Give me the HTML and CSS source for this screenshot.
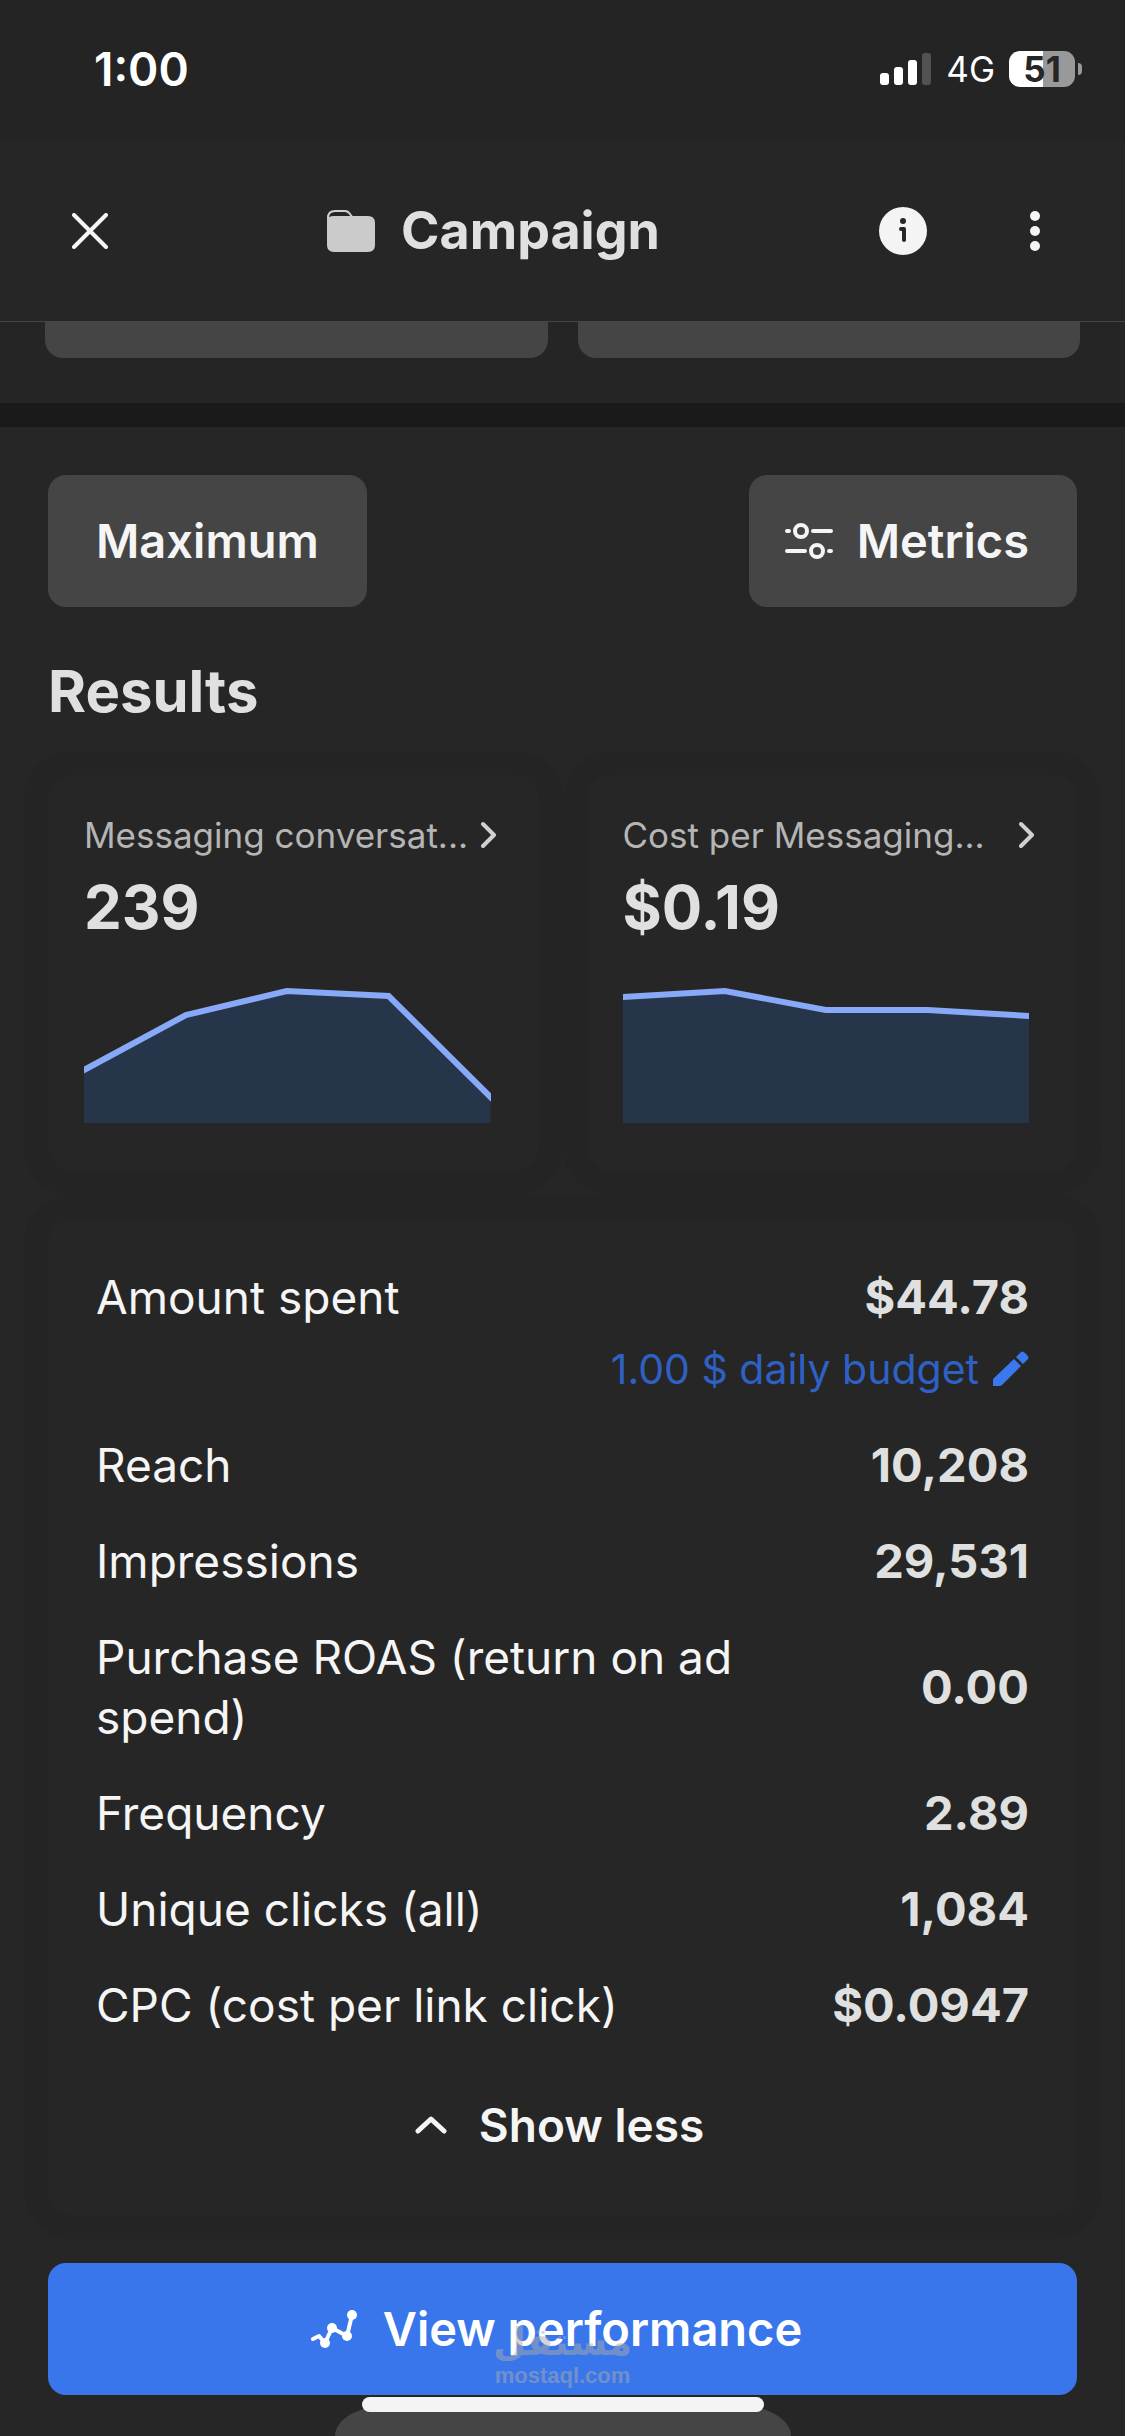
FILE: index.html
```html
<!DOCTYPE html>
<html lang="en">
<head>
    <meta charset="UTF-8">
    <meta name="viewport" content="width=device-width, initial-scale=1.0">
    <title>Campaign</title>
    <link rel="stylesheet" href="styles.css">
</head>
<body>
    <div class="status-bar">
        <span class="time">1:00</span>
        <div class="status-icons">
            <svg class="signal" width="52" height="32" viewBox="0 0 52 32">
                <rect x="0" y="20" width="9" height="12" rx="3" fill="#fff"/>
                <rect x="14" y="14" width="9" height="18" rx="3" fill="#fff"/>
                <rect x="28" y="7" width="9" height="25" rx="3" fill="#fff"/>
                <rect x="42" y="0" width="9" height="32" rx="3" fill="#525252"/>
            </svg>
            <span class="network">4G</span>
            <span class="battery">51</span>
        </div>
    </div>

    <header class="header">
        <button type="button" class="icon-btn" aria-label="Close">
            <svg width="36" height="36" viewBox="0 0 36 36" fill="none" stroke="#f5f5f5" stroke-width="4" stroke-linecap="round">
                <path d="M2 2L34 34M34 2L2 34"/>
            </svg>
        </button>
        <h1 class="title">
            <svg width="48" height="42" viewBox="0 0 48 42">
                <path d="M1 12V8Q1 1 8 1H18Q21 1 23 4L26 8" fill="none" stroke="#cfcfcf" stroke-width="2"/>
                <path d="M0 12Q0 6 6 6H41Q48 6 48 13V35Q48 42 41 42H7Q0 42 0 35Z" fill="#cbcbcb"/>
                <path d="M3 6Q4 3 8 3H17Q20 3 22 6Z" fill="#262626"/>
            </svg>
            Campaign
        </h1>
        <div class="actions">
            <button type="button" class="icon-btn" aria-label="Info">
                <svg width="48" height="48" viewBox="0 0 48 48">
                    <circle cx="24" cy="24" r="24" fill="#f4f4f4"/>
                    <circle cx="24" cy="14" r="3" fill="#262626"/>
                    <path d="M22 22H25V33" fill="none" stroke="#262626" stroke-width="4" stroke-linecap="round" stroke-linejoin="round"/>
                </svg>
            </button>
            <button type="button" class="icon-btn" aria-label="More">
                <svg width="10" height="40" viewBox="0 0 10 40" fill="#f5f5f5">
                    <circle cx="5" cy="5" r="5"/>
                    <circle cx="5" cy="20" r="5"/>
                    <circle cx="5" cy="35" r="5"/>
                </svg>
            </button>
        </div>
    </header>

    <div class="previous">
        <div class="tile"></div>
        <div class="tile"></div>
    </div>

    <main class="content">
        <div class="toolbar">
            <button type="button" class="btn">Maximum</button>
            <button type="button" class="btn btn-icon">
                <svg width="48" height="36" viewBox="0 0 48 36" fill="none" stroke="#f5f5f5" stroke-width="4" stroke-linecap="round">
                    <circle cx="16" cy="8" r="6"/>
                    <path d="M2 8H4M28 8H46"/>
                    <circle cx="32" cy="28" r="6"/>
                    <path d="M2 28H20M44 28H46"/>
                </svg>
                Metrics
            </button>
        </div>

        <h2 class="section-title">Results</h2>

        <div class="cards">
            <a href="#" class="card">
                <div class="card-head">
                    <span class="card-label">Messaging conversat...</span>
                    <svg class="chevron" width="16" height="28" viewBox="0 0 16 28" fill="none" stroke="#d0d0d0" stroke-width="4" stroke-linecap="round" stroke-linejoin="round">
                        <path d="M2 3L13 14L2 25"/>
                    </svg>
                </div>
                <div class="card-value">239</div>
                <svg class="chart" viewBox="0 0 407 135" preserveAspectRatio="none">
                    <path d="M0 82L102 27L203 3L305 8L407 109V135H0Z" fill="#27354b"/>
                    <path d="M-5 85L0 82L102 27L203 3L305 8L407 109L412 114" fill="none" stroke="#88a9f8" stroke-width="6"/>
                </svg>
            </a>
            <a href="#" class="card">
                <div class="card-head">
                    <span class="card-label">Cost per Messaging...</span>
                    <svg class="chevron" width="16" height="28" viewBox="0 0 16 28" fill="none" stroke="#d0d0d0" stroke-width="4" stroke-linecap="round" stroke-linejoin="round">
                        <path d="M2 3L13 14L2 25"/>
                    </svg>
                </div>
                <div class="card-value">$0.19</div>
                <svg class="chart" viewBox="0 0 407 135" preserveAspectRatio="none">
                    <path d="M0 9L102 3L203 22H305L407 28V135H0Z" fill="#27354b"/>
                    <path d="M-5 9L0 9L102 3L203 22H305L407 28L412 28" fill="none" stroke="#88a9f8" stroke-width="6"/>
                </svg>
            </a>
        </div>

        <section class="stats">
            <table>
                <tr class="spent">
                    <th scope="row">Amount spent</th>
                    <td>$44.78</td>
                </tr>
                <tr class="budget">
                    <td colspan="2">
                        <a href="#">1.00 $ daily budget
                            <svg width="36" height="36" viewBox="0 0 36 36" fill="#3b77ee">
                                <path d="M21 8L28 15L9 34Q8 35 6 35H0V29Q0 28 1 27Z"/>
                                <path d="M23 6L27 2Q29 -1 32 2L34 4Q37 7 34 9L30 13Z"/>
                            </svg>
                        </a>
                    </td>
                </tr>
                <tr>
                    <th scope="row">Reach</th>
                    <td>10,208</td>
                </tr>
                <tr>
                    <th scope="row">Impressions</th>
                    <td>29,531</td>
                </tr>
                <tr>
                    <th scope="row">Purchase ROAS (return on ad spend)</th>
                    <td>0.00</td>
                </tr>
                <tr>
                    <th scope="row">Frequency</th>
                    <td>2.89</td>
                </tr>
                <tr>
                    <th scope="row">Unique clicks (all)</th>
                    <td>1,084</td>
                </tr>
                <tr>
                    <th scope="row">CPC (cost per link click)</th>
                    <td>$0.0947</td>
                </tr>
            </table>
            <button type="button" class="show-less">
                <svg width="32" height="20" viewBox="0 0 32 20" fill="none" stroke="#f5f5f5" stroke-width="5" stroke-linecap="round" stroke-linejoin="round">
                    <path d="M3 16L16 4L29 16"/>
                </svg>
                Show less
            </button>
        </section>

        <button type="button" class="btn btn-icon btn-primary">
            <svg width="48" height="40" viewBox="0 0 48 40" fill="#fff" stroke="#fff" stroke-linecap="round" stroke-linejoin="round">
                <path d="M2 30L8 27L14 34L21 19L36 27L41 6" fill="none" stroke-width="4"/>
                <circle cx="14" cy="34" r="5" stroke="none"/>
                <circle cx="21" cy="19" r="5" stroke="none"/>
                <circle cx="36" cy="27" r="5" stroke="none"/>
                <circle cx="41" cy="6" r="5" stroke="none"/>
            </svg>
            View performance
        </button>
    </main>

    <!-- bottom overlays -->
    <div class="bubble"></div>
    <div class="home-indicator"></div>
    <div class="watermark">
        <span class="watermark-logo" lang="ar">مستقل</span>
        <span class="watermark-url">mostaql.com</span>
    </div>
</body>
</html>
```

FILE: styles.css
```css
* {
    box-sizing: border-box;
}

body {
    position: relative;
    margin: 0;
    min-height: 100vh;
    background-color: #262626;
    color: #f5f5f5;
    font-family: Inter, "Liberation Sans", sans-serif;
    font-size: 46px;
    line-height: 60px;
}

button {
    font: inherit;
    color: inherit;
    border: none;
    cursor: pointer;
}

a {
    color: inherit;
    text-decoration: none;
}

svg {
    display: block;
    flex-shrink: 0;
}

/* Status bar */
.status-bar {
    display: flex;
    justify-content: space-between;
    align-items: center;
    height: 141px;
    padding: 0 42px 3px 94px;
    background-color: #242424;
    color: #fff;
}

.time {
    font-weight: 600;
}

.status-icons {
    display: flex;
    align-items: center;
    gap: 14px;
}

.network {
    font-size: 35px;
}

.battery {
    position: relative;
    width: 66px;
    height: 36px;
    margin-right: 8px;
    border-radius: 11px;
    background: linear-gradient(to right, #fff 52%, #999 52%);
    color: #262626;
    font-size: 35px;
    font-weight: 700;
    line-height: 36px;
    text-align: center;
}

.battery::after {
    content: "";
    position: absolute;
    top: 12px;
    right: -7px;
    width: 4px;
    height: 12px;
    border-radius: 0 4px 4px 0;
    background-color: #999;
}

/* Header */
.header {
    display: flex;
    justify-content: space-between;
    align-items: center;
    height: 181px;
    padding: 0 85px 0 72px;
    border-bottom: 1px solid #454545;
}

.icon-btn {
    padding: 0;
    background: none;
}

.title {
    display: flex;
    align-items: center;
    gap: 26px;
    margin: 0;
    color: #dfe0df;
    font-size: 52px;
    font-weight: 700;
}

.actions {
    display: flex;
    align-items: center;
    gap: 103px;
}

/* End of the block scrolled under the header */
.previous {
    display: grid;
    grid-template-columns: 1fr 1fr;
    gap: 30px;
    padding: 0 45px 45px;
    border-bottom: 24px solid #1a1a1a;
    background-color: #252525;
}

.tile {
    height: 36px;
    border-radius: 0 0 18px 18px;
    background-color: #454545;
}

.content {
    padding: 48px 48px 36px;
}

.toolbar {
    display: flex;
    justify-content: space-between;
}

.btn {
    display: flex;
    justify-content: center;
    align-items: center;
    gap: 24px;
    height: 132px;
    padding: 0 48px;
    border-radius: 18px;
    background-color: #454545;
    font-size: 47px;
    font-weight: 600;
}

.btn-icon {
    padding-left: 36px;
}

.section-title {
    margin: 48px 0;
    color: #dfe0df;
    font-size: 58px;
    font-weight: 700;
    line-height: 72px;
}

/* Result cards */
.cards {
    display: grid;
    grid-template-columns: 1fr 1fr;
    gap: 48px;
    margin-bottom: 48px;
}

.card {
    min-width: 0;
    padding: 36px 48px 48px 36px;
    border-radius: 24px;
    background-color: #262626;
    box-shadow: 0 0 0 24px #242424;
}

.card-head {
    display: flex;
    align-items: center;
    justify-content: space-between;
    height: 48px;
    margin-right: -6px;
}

.card-label {
    color: #b5b5b5;
    font-size: 35px;
    line-height: 48px;
    white-space: nowrap;
}

.card-value {
    margin: 12px 0 45px;
    color: #dfe0df;
    font-size: 60px;
    font-weight: 700;
    line-height: 72px;
}

.chart {
    width: 100%;
    height: 135px;
}

/* Stats list */
.stats {
    padding: 30px 48px 24px;
    border-radius: 24px;
    background-color: #262626;
    box-shadow: 0 0 0 24px #242424;
}

.stats table {
    width: 100%;
    border-collapse: collapse;
}

.stats th {
    width: 70%;
    padding: 18px 0;
    font-weight: 400;
    text-align: left;
}

.stats td {
    padding: 18px 0;
    color: #dfe0df;
    font-size: 47px;
    font-weight: 700;
    text-align: right;
}

.stats .spent th, .stats .spent td {
    padding-bottom: 6px;
}

.stats .budget td {
    padding-top: 6px;
    font-weight: 400;
}

.budget a {
    display: flex;
    justify-content: flex-end;
    align-items: center;
    gap: 14px;
    color: #2f60c4;
    font-size: 41px;
}

.show-less {
    display: flex;
    justify-content: center;
    align-items: center;
    gap: 32px;
    width: 100%;
    height: 132px;
    margin-top: 6px;
    padding: 0 6px 0 0;
    background: none;
    font-weight: 600;
}

.btn-primary {
    width: 100%;
    margin-top: 48px;
    background-color: #3976eb;
    color: #fff;
}

/* Bottom overlays */
.bubble {
    position: absolute;
    left: 50%;
    bottom: 0;
    width: 456px;
    height: 32px;
    border-radius: 60px 60px 0 0 / 32px 32px 0 0;
    background-color: #454545;
    transform: translateX(-50%);
}

.home-indicator {
    position: absolute;
    left: 50%;
    bottom: 24px;
    width: 402px;
    height: 15px;
    border-radius: 8px;
    background-color: #f4f4f4;
    transform: translateX(-50%);
}

.watermark {
    position: absolute;
    left: 50%;
    bottom: 48px;
    display: flex;
    flex-direction: column;
    align-items: center;
    color: #aaaaaa;
    opacity: 0.5;
    transform: translateX(-50%);
}

.watermark-logo {
    font-family: "DejaVu Sans", sans-serif;
    font-size: 38px;
    font-weight: 700;
    line-height: 44px;
}

.watermark-url {
    font-family: "Liberation Sans", sans-serif;
    font-size: 22px;
    font-weight: 700;
    line-height: 24px;
}
```
